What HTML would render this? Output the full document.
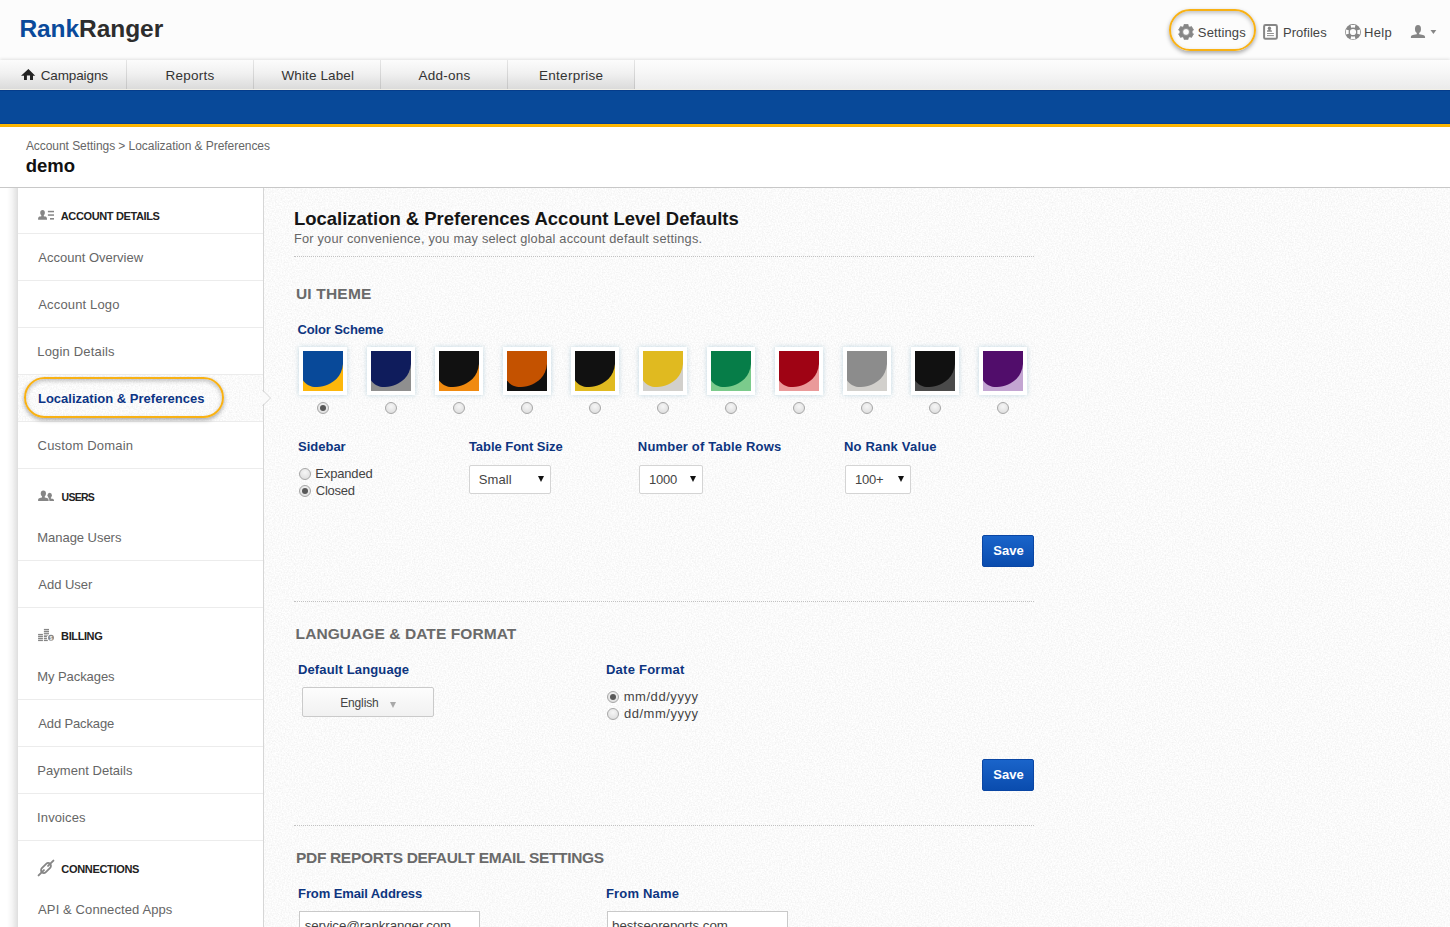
<!DOCTYPE html>
<html lang="en">
<head>
<meta charset="utf-8">
<title>Localization &amp; Preferences</title>
<style>
*{box-sizing:border-box;margin:0;padding:0}
html,body{width:1450px;height:927px;overflow:hidden;background:#fff}
body{font-family:"Liberation Sans",sans-serif;color:#333;position:relative}
.abs{position:absolute}
.t{position:absolute;white-space:nowrap;line-height:20px}
#top{position:absolute;left:0;top:0;width:1450px;height:60px;background:#fcfcfc}
#setpill{position:absolute;left:1169px;top:9px;width:87px;height:42px;border:2px solid #f8b114;border-radius:21px;box-shadow:0 2px 4px rgba(0,0,0,.34),inset 0 2px 4px rgba(0,0,0,.24)}
#nav{position:absolute;left:0;top:60px;width:1450px;height:29px;background:linear-gradient(#fdfdfd,#f6f6f6 45%,#ebebeb);box-shadow:0 -1px 3px rgba(0,0,0,.11)}
#navtabs{position:absolute;left:0;top:0;width:634px;height:29px;background:linear-gradient(#fcfcfc,#f1f1f1 45%,#dbdbdb)}
#nav i{position:absolute;top:0;width:1px;height:29px;background:linear-gradient(#e6e6e6,#c4c4c4)}
#navline{position:absolute;left:0;top:89px;width:1450px;height:1px;background:#f1efe6}
#blue{position:absolute;left:0;top:90px;width:1450px;height:34px;background:#084999;border-top:1px solid #053c8b;border-bottom:1px solid #053f95}
#yellow{position:absolute;left:0;top:124px;width:1450px;height:3px;background:linear-gradient(#fdbb00,#fbae00)}
#crumbbar{position:absolute;left:0;top:127px;width:1450px;height:61px;background:#fff;border-bottom:1px solid #c8c8c8}
#main{position:absolute;left:264px;top:188px;width:1186px;height:739px;background:#fff}
#side{position:absolute;left:18px;top:188px;width:246px;height:739px;background:#fff;border-right:1px solid #d6d6d6}
#sideshadow{position:absolute;left:7px;top:188px;width:11px;height:739px;background:linear-gradient(to right,rgba(0,0,0,0),rgba(0,0,0,.04) 45%,rgba(0,0,0,.13))}
.sd{position:absolute;left:18px;width:245px;height:1px;background:#ececec}
#selrow{position:absolute;left:18px;top:375px;width:245px;height:46px;background:#fff}
#selpill{position:absolute;left:24px;top:377px;width:200px;height:41px;border:2px solid #f8b114;border-radius:21px;box-shadow:0 2px 4px rgba(0,0,0,.34),inset 0 2px 4px rgba(0,0,0,.24)}
.dot{position:absolute;left:294px;width:740px;height:0;border-top:1px dotted #c2c2c2}
.sw{position:absolute;width:48px;height:48px;background:#fff;padding:4px;box-shadow:0 0 5px rgba(140,185,205,.5)}
.sw svg{display:block}
.rd{position:absolute;width:12px;height:12px;border-radius:50%;border:1px solid #a6a6a6;background:radial-gradient(circle at 50% 35%,#f6f6f6,#d9d9d9)}
.rd.on::after{content:"";position:absolute;left:2px;top:2px;width:6px;height:6px;border-radius:50%;background:#585858}
.select{position:absolute;height:29px;background:#fff;border:1px solid #d4d4d4;border-radius:2px}
.select i{position:absolute;right:6px;top:10px;width:0;height:0;border-left:3px solid transparent;border-right:3px solid transparent;border-top:6px solid #111}
.btn{position:absolute;width:52px;height:32px;background:linear-gradient(#1a64ca,#0a4cae);border:1px solid #0a46a4;border-radius:2px}
.lang{position:absolute;width:132px;height:30px;border:1px solid #cacaca;background:linear-gradient(#fdfdfd,#f1f1f1);border-radius:2px}
.lang i{position:absolute;left:87px;top:14px;width:0;height:0;border-left:3px solid transparent;border-right:3px solid transparent;border-top:6px solid #a8a8a8}
.inp{position:absolute;width:181px;height:28px;background:#fff;border:1px solid #c9c9c9}
</style>
</head>
<body>

<div id="top"></div>
<div id="setpill"></div>
<div class="t" id="lg1" style="left:19.43px;top:19px;font-size:24.5px;color:#2d2d2d;letter-spacing:-0.063px;font-weight:bold"><span style="color:#0a4a9b">Rank</span>Ranger</div>
<div class="t" id="tset" style="left:1197.86px;top:23px;font-size:13px;color:#444;letter-spacing:0.124px">Settings</div>
<div class="t" id="tpro" style="left:1283px;top:23px;font-size:13px;color:#444;letter-spacing:0.041px">Profiles</div>
<div class="t" id="thlp" style="left:1364px;top:23px;font-size:13px;color:#444;letter-spacing:0.331px">Help</div>
<div id="nav"><div id="navtabs"></div><i style="left:126px"></i><i style="left:253px"></i><i style="left:380px"></i><i style="left:507px"></i><i style="left:634px"></i></div>
<div class="t" id="n1" style="left:40.68px;top:66px;font-size:13.5px;color:#333;letter-spacing:-0.115px">Campaigns</div>
<div class="t" id="n2" style="left:165.4px;top:66px;font-size:13.5px;color:#333;letter-spacing:0.275px">Reports</div>
<div class="t" id="n3" style="left:281.5px;top:66px;font-size:13.5px;color:#333;letter-spacing:0.12px">White Label</div>
<div class="t" id="n4" style="left:418.6px;top:66px;font-size:13.5px;color:#333;letter-spacing:0.223px">Add-ons</div>
<div class="t" id="n5" style="left:539px;top:66px;font-size:13.5px;color:#333;letter-spacing:0.287px">Enterprise</div>
<div id="navline"></div>
<div id="blue"></div>
<div id="yellow"></div>
<div id="crumbbar"></div>
<div class="t" id="crumb" style="left:25.9px;top:136px;font-size:12px;color:#666;letter-spacing:-0.054px">Account Settings &gt; Localization &amp; Preferences</div>
<div class="t" id="acct" style="left:25.8px;top:156px;font-size:18.5px;color:#111;letter-spacing:-0.026px;font-weight:bold">demo</div>
<div id="main"></div>
<svg class="abs" style="left:264px;top:188px" width="1186" height="739"><filter id="nz" x="0" y="0" width="100%" height="100%"><feTurbulence type="fractalNoise" baseFrequency="0.7" numOctaves="2" seed="3"/><feColorMatrix type="matrix" values="0 0 0 0 0  0 0 0 0 0  0 0 0 0 0  0.10 0 0 0 -0.031"/></filter><rect width="1186" height="739" filter="url(#nz)"/></svg>
<div id="sideshadow"></div>
<div id="side"></div>
<div id="selrow"></div>
<svg class="abs" style="left:18px;top:375px" width="245" height="46"><rect width="245" height="46" filter="url(#nz)"/></svg>
<div class="sd" style="top:233px"></div>
<div class="sd" style="top:280px"></div>
<div class="sd" style="top:327px"></div>
<div class="sd" style="top:374px"></div>
<div class="sd" style="top:421px"></div>
<div class="sd" style="top:468px"></div>
<div class="sd" style="top:560px"></div>
<div class="sd" style="top:607px"></div>
<div class="sd" style="top:699px"></div>
<div class="sd" style="top:746px"></div>
<div class="sd" style="top:793px"></div>
<div class="sd" style="top:840px"></div>

<div id="selpill"></div>
<div class="t" id="sh1" style="left:60.8px;top:206px;font-size:11px;color:#222;letter-spacing:-0.368px;font-weight:bold">ACCOUNT DETAILS</div>
<div class="t" id="s1" style="left:38.3px;top:248px;font-size:13px;color:#666;letter-spacing:0.002px">Account Overview</div>
<div class="t" id="s2" style="left:38.3px;top:295px;font-size:13px;color:#666;letter-spacing:0.148px">Account Logo</div>
<div class="t" id="s3" style="left:37.3px;top:342px;font-size:13px;color:#666;letter-spacing:0.178px">Login Details</div>
<div class="t" id="s4" style="left:37.95px;top:389px;font-size:13px;color:#0b3485;letter-spacing:0.01px;font-weight:bold">Localization &amp; Preferences</div>
<div class="t" id="s5" style="left:37.6px;top:436px;font-size:13px;color:#666;letter-spacing:0.186px">Custom Domain</div>
<div class="t" id="sh2" style="left:61.6px;top:487px;font-size:10.5px;color:#222;letter-spacing:-0.736px;font-weight:bold">USERS</div>
<div class="t" id="s6" style="left:37.3px;top:528px;font-size:13px;color:#666;letter-spacing:-0.04px">Manage Users</div>
<div class="t" id="s7" style="left:38.3px;top:575px;font-size:13px;color:#666;letter-spacing:-0.013px">Add User</div>
<div class="t" id="sh3" style="left:61.08px;top:626px;font-size:11px;color:#222;letter-spacing:-0.39px;font-weight:bold">BILLING</div>
<div class="t" id="s8" style="left:37.3px;top:667px;font-size:13px;color:#666;letter-spacing:-0.08px">My Packages</div>
<div class="t" id="s9" style="left:38.3px;top:714px;font-size:13px;color:#666;letter-spacing:-0.14px">Add Package</div>
<div class="t" id="s10" style="left:37.3px;top:761px;font-size:13px;color:#666;letter-spacing:0.032px">Payment Details</div>
<div class="t" id="s11" style="left:37.1px;top:808px;font-size:13px;color:#666;letter-spacing:0.105px">Invoices</div>
<div class="t" id="sh4" style="left:61.3px;top:859px;font-size:11px;color:#222;letter-spacing:-0.324px;font-weight:bold">CONNECTIONS</div>
<div class="t" id="s12" style="left:38.1px;top:900px;font-size:13px;color:#666;letter-spacing:0.106px">API &amp; Connected Apps</div>
<svg class="abs" style="left:262px;top:388px" width="10" height="20" viewBox="0 0 10 20"><path d="M0,2.4 L0,17.6 L7.6,10 Z" fill="#fafafa"/><path d="M0.5,2 L8.5,10 L0.5,18" fill="none" stroke="#d2d2d2" stroke-width="1"/></svg>

<div class="t" id="h1" style="left:294px;top:209px;font-size:18.5px;color:#151515;letter-spacing:-0.016px;font-weight:bold">Localization &amp; Preferences Account Level Defaults</div>
<div class="t" id="sub" style="left:294px;top:229px;font-size:12.75px;color:#666;letter-spacing:0.216px">For your convenience, you may select global account default settings.</div>
<div class="dot" style="top:256px"></div>
<div class="t" id="h2a" style="left:295.89px;top:284px;font-size:15.5px;color:#6a6a6a;letter-spacing:0.202px;font-weight:bold">UI THEME</div>
<div class="t" id="l1" style="left:297.54px;top:320px;font-size:13px;color:#0d3580;letter-spacing:-0.135px;font-weight:bold">Color Scheme</div>
<div class="sw" style="left:299px;top:347px"><svg width="40" height="40" viewBox="0 0 40 40"><rect width="40" height="40" fill="#fdb70b"/><path d="M0,0H40V12.9C39.5,19 37,24 33.8,27.5C29,32.5 22,35.5 14,36.1C8,36.3 2.5,33.5 0,29.2Z" fill="#084999"/></svg></div>
<div class="rd on" style="left:317px;top:402px"></div>
<div class="sw" style="left:367px;top:347px"><svg width="40" height="40" viewBox="0 0 40 40"><rect width="40" height="40" fill="#8f8f8f"/><path d="M0,0H40V12.9C39.5,19 37,24 33.8,27.5C29,32.5 22,35.5 14,36.1C8,36.3 2.5,33.5 0,29.2Z" fill="#0f1c5c"/></svg></div>
<div class="rd" style="left:385px;top:402px"></div>
<div class="sw" style="left:435px;top:347px"><svg width="40" height="40" viewBox="0 0 40 40"><rect width="40" height="40" fill="#f08a10"/><path d="M0,0H40V12.9C39.5,19 37,24 33.8,27.5C29,32.5 22,35.5 14,36.1C8,36.3 2.5,33.5 0,29.2Z" fill="#111111"/></svg></div>
<div class="rd" style="left:453px;top:402px"></div>
<div class="sw" style="left:503px;top:347px"><svg width="40" height="40" viewBox="0 0 40 40"><rect width="40" height="40" fill="#111111"/><path d="M0,0H40V12.9C39.5,19 37,24 33.8,27.5C29,32.5 22,35.5 14,36.1C8,36.3 2.5,33.5 0,29.2Z" fill="#c45200"/></svg></div>
<div class="rd" style="left:521px;top:402px"></div>
<div class="sw" style="left:571px;top:347px"><svg width="40" height="40" viewBox="0 0 40 40"><rect width="40" height="40" fill="#e0ba20"/><path d="M0,0H40V12.9C39.5,19 37,24 33.8,27.5C29,32.5 22,35.5 14,36.1C8,36.3 2.5,33.5 0,29.2Z" fill="#111111"/></svg></div>
<div class="rd" style="left:589px;top:402px"></div>
<div class="sw" style="left:639px;top:347px"><svg width="40" height="40" viewBox="0 0 40 40"><rect width="40" height="40" fill="#d2d0cc"/><path d="M0,0H40V12.9C39.5,19 37,24 33.8,27.5C29,32.5 22,35.5 14,36.1C8,36.3 2.5,33.5 0,29.2Z" fill="#e0ba20"/></svg></div>
<div class="rd" style="left:657px;top:402px"></div>
<div class="sw" style="left:707px;top:347px"><svg width="40" height="40" viewBox="0 0 40 40"><rect width="40" height="40" fill="#7bcb8c"/><path d="M0,0H40V12.9C39.5,19 37,24 33.8,27.5C29,32.5 22,35.5 14,36.1C8,36.3 2.5,33.5 0,29.2Z" fill="#067d48"/></svg></div>
<div class="rd" style="left:725px;top:402px"></div>
<div class="sw" style="left:775px;top:347px"><svg width="40" height="40" viewBox="0 0 40 40"><rect width="40" height="40" fill="#ea9a9a"/><path d="M0,0H40V12.9C39.5,19 37,24 33.8,27.5C29,32.5 22,35.5 14,36.1C8,36.3 2.5,33.5 0,29.2Z" fill="#9f0314"/></svg></div>
<div class="rd" style="left:793px;top:402px"></div>
<div class="sw" style="left:843px;top:347px"><svg width="40" height="40" viewBox="0 0 40 40"><rect width="40" height="40" fill="#d2d0cc"/><path d="M0,0H40V12.9C39.5,19 37,24 33.8,27.5C29,32.5 22,35.5 14,36.1C8,36.3 2.5,33.5 0,29.2Z" fill="#8c8c8c"/></svg></div>
<div class="rd" style="left:861px;top:402px"></div>
<div class="sw" style="left:911px;top:347px"><svg width="40" height="40" viewBox="0 0 40 40"><rect width="40" height="40" fill="#4a4a4a"/><path d="M0,0H40V12.9C39.5,19 37,24 33.8,27.5C29,32.5 22,35.5 14,36.1C8,36.3 2.5,33.5 0,29.2Z" fill="#111111"/></svg></div>
<div class="rd" style="left:929px;top:402px"></div>
<div class="sw" style="left:979px;top:347px"><svg width="40" height="40" viewBox="0 0 40 40"><rect width="40" height="40" fill="#c3a5d2"/><path d="M0,0H40V12.9C39.5,19 37,24 33.8,27.5C29,32.5 22,35.5 14,36.1C8,36.3 2.5,33.5 0,29.2Z" fill="#510d6b"/></svg></div>
<div class="rd" style="left:997px;top:402px"></div>

<div class="t" id="l2" style="left:298.0px;top:437px;font-size:13px;color:#0d3580;letter-spacing:-0.0px;font-weight:bold">Sidebar</div>
<div class="t" id="l3" style="left:468.9px;top:437px;font-size:13px;color:#0d3580;letter-spacing:-0.039px;font-weight:bold">Table Font Size</div>
<div class="t" id="l4" style="left:637.85px;top:437px;font-size:13px;color:#0d3580;letter-spacing:0.185px;font-weight:bold">Number of Table Rows</div>
<div class="t" id="l5" style="left:843.95px;top:437px;font-size:13px;color:#0d3580;letter-spacing:0.195px;font-weight:bold">No Rank Value</div>
<div class="rd" style="left:299px;top:468px"></div>
<div class="rd on" style="left:299px;top:485px"></div>
<div class="t" id="r1" style="left:315.3px;top:464px;font-size:13px;color:#444;letter-spacing:-0.16px">Expanded</div>
<div class="t" id="r2" style="left:315.81px;top:481px;font-size:13px;color:#444;letter-spacing:-0.248px">Closed</div>
<div class="select" style="left:469px;top:465px;width:82px"><i></i></div>
<div class="select" style="left:639px;top:465px;width:64px"><i></i></div>
<div class="select" style="left:845px;top:465px;width:66px"><i></i></div>
<div class="t" id="o1" style="left:478.68px;top:470px;font-size:13px;color:#444;letter-spacing:0.11px">Small</div>
<div class="t" id="o2" style="left:649.0px;top:470px;font-size:13px;color:#444;letter-spacing:-0.261px">1000</div>
<div class="t" id="o3" style="left:854.96px;top:470px;font-size:13px;color:#444;letter-spacing:-0.217px">100+</div>
<div class="btn" style="left:982px;top:535px"></div>
<div class="t" id="b1" style="left:993.33px;top:541px;font-size:13px;color:#fff;letter-spacing:-0.025px;font-weight:bold">Save</div>
<div class="dot" style="top:601px"></div>
<div class="t" id="h2b" style="left:295.6px;top:624px;font-size:15.5px;color:#6a6a6a;letter-spacing:0.08px;font-weight:bold">LANGUAGE &amp; DATE FORMAT</div>
<div class="t" id="l6" style="left:297.95px;top:660px;font-size:13px;color:#0d3580;letter-spacing:0.139px;font-weight:bold">Default Language</div>
<div class="t" id="l7" style="left:605.95px;top:660px;font-size:13px;color:#0d3580;letter-spacing:0.249px;font-weight:bold">Date Format</div>
<div class="lang" style="left:302px;top:687px"><i></i></div>
<div class="t" id="eng" style="left:340.19px;top:693px;font-size:12px;color:#444;letter-spacing:-0.14px">English</div>
<div class="rd on" style="left:607px;top:691px"></div>
<div class="rd" style="left:607px;top:708px"></div>
<div class="t" id="r3" style="left:623.7px;top:687px;font-size:13px;color:#444;letter-spacing:0.551px">mm/dd/yyyy</div>
<div class="t" id="r4" style="left:623.98px;top:704px;font-size:13px;color:#444;letter-spacing:0.521px">dd/mm/yyyy</div>
<div class="btn" style="left:982px;top:759px"></div>
<div class="t" id="b2" style="left:993.33px;top:765px;font-size:13px;color:#fff;letter-spacing:-0.017px;font-weight:bold">Save</div>
<div class="dot" style="top:825px"></div>
<div class="t" id="h2c" style="left:296px;top:848px;font-size:15.5px;color:#6a6a6a;letter-spacing:-0.326px;font-weight:bold">PDF REPORTS DEFAULT EMAIL SETTINGS</div>
<div class="t" id="l8" style="left:298.05px;top:884px;font-size:13px;color:#0d3580;letter-spacing:-0.104px;font-weight:bold">From Email Address</div>
<div class="t" id="l9" style="left:605.94px;top:884px;font-size:13px;color:#0d3580;letter-spacing:0.186px;font-weight:bold">From Name</div>
<div class="inp" style="left:299px;top:911px"></div>
<div class="inp" style="left:607px;top:911px"></div>
<div class="t" id="i1" style="left:304.65px;top:916px;font-size:13.33px;color:#444;letter-spacing:-0.086px">service@rankranger.com</div>
<div class="t" id="i2" style="left:612.05px;top:916px;font-size:13.33px;color:#444;letter-spacing:-0.074px">bestseoreports.com</div>
<svg class="abs" style="left:0;top:0;pointer-events:none" width="1450" height="927" viewBox="0 0 1450 927">
<path d="M28.4,68.9 L35.2,75.7 H33 V80 H30 V75.5 H26.9 V80 H24 V75.7 H21 Z" fill="#222"/>
<path d="M1183.90,26.24 L1184.00,24.53 L1188.10,24.53 L1188.20,26.24 L1189.92,27.23 L1191.45,26.46 L1193.50,30.02 L1192.07,30.96 L1192.07,32.94 L1193.50,33.88 L1191.45,37.44 L1189.92,36.67 L1188.20,37.66 L1188.10,39.37 L1184.00,39.37 L1183.90,37.66 L1182.18,36.67 L1180.65,37.44 L1178.60,33.88 L1180.03,32.94 L1180.03,30.96 L1178.60,30.02 L1180.65,26.46 L1182.18,27.23Z M1189.45,31.95 A3.4,3.4 0 1,0 1182.6499999999999,31.95 A3.4,3.4 0 1,0 1189.45,31.95Z" fill="#868686" fill-rule="evenodd" stroke="#868686" stroke-width="0.8" stroke-linejoin="round"/>
<rect x="1264.1" y="25.1" width="12.8" height="13.7" rx="1.4" fill="#fff" stroke="#868686" stroke-width="2"/>
<g fill="#868686"><ellipse cx="1269.45" cy="28.25" rx="1.65" ry="1.65"/><path d="M1267.00,31.70 L1267.00,31.28 C1267.20,30.79 1266.32,30.46 1268.46,30.30 L1268.46,28.90 L1270.44,28.90 L1270.44,30.30 C1272.59,30.46 1271.70,30.79 1271.90,31.28 L1271.90,31.70 Z"/></g>
<rect x="1267" y="33.1" width="6.9" height="0.9" fill="#868686"/><rect x="1267" y="35.2" width="6.9" height="0.9" fill="#868686"/>
<circle cx="1353" cy="32" r="7.950000000000001" fill="#868686"/><path d="M1350.6,25.1 Q1353,24.65 1355.4,25.1 L1354.85,27.8 Q1353,27.4 1351.15,27.8 Z" fill="#fcfcfc" transform="rotate(0 1353 32)"/><path d="M1350.6,25.1 Q1353,24.65 1355.4,25.1 L1354.85,27.8 Q1353,27.4 1351.15,27.8 Z" fill="#fcfcfc" transform="rotate(90 1353 32)"/><path d="M1350.6,25.1 Q1353,24.65 1355.4,25.1 L1354.85,27.8 Q1353,27.4 1351.15,27.8 Z" fill="#fcfcfc" transform="rotate(180 1353 32)"/><path d="M1350.6,25.1 Q1353,24.65 1355.4,25.1 L1354.85,27.8 Q1353,27.4 1351.15,27.8 Z" fill="#fcfcfc" transform="rotate(270 1353 32)"/><circle cx="1353" cy="32" r="3.1" fill="#fcfcfc"/>
<g fill="#868686"><ellipse cx="1417.97" cy="29.05" rx="3.00" ry="4.05"/><path d="M1410.90,37.90 L1410.90,36.78 C1411.10,35.47 1412.27,34.61 1416.77,34.16 L1416.77,32.10 L1419.17,32.10 L1419.17,34.16 C1423.67,34.61 1424.85,35.47 1425.05,36.78 L1425.05,37.90 Z"/></g>
<path d="M1430.5,30.1 H1436.3 L1433.4,34 Z" fill="#868686"/>
<g fill="#868686"><ellipse cx="42.55" cy="212.75" rx="2.30" ry="2.65"/><path d="M38.10,219.70 L38.10,218.69 C38.30,217.52 38.18,216.75 41.31,216.35 L41.31,214.40 L43.79,214.40 L43.79,216.35 C46.92,216.75 46.80,217.52 47.00,218.69 L47.00,219.70 Z"/></g>
<rect x="47.9" y="210.8" width="6.1" height="1.5" fill="#868686"/><rect x="47.9" y="214.3" width="6.1" height="1.5" fill="#868686"/><rect x="50" y="218" width="4" height="1.6" fill="#868686"/>
<g fill="#868686"><ellipse cx="49.70" cy="495.20" rx="2.20" ry="2.50"/><path d="M45.40,501.00 L45.40,500.23 C45.60,499.33 45.52,498.73 48.51,498.43 L48.51,496.70 L50.89,496.70 L50.89,498.43 C53.88,498.73 53.80,499.33 54.00,500.23 L54.00,501.00 Z"/></g>
<g fill="#fff" stroke="#fff" stroke-width="1.5"><ellipse cx="43.35" cy="493.45" rx="2.60" ry="2.95"/><path d="M38.10,501.00 L38.10,499.92 C38.30,498.67 38.41,497.84 41.95,497.41 L41.95,495.40 L44.75,495.40 L44.75,497.41 C48.29,497.84 48.40,498.67 48.60,499.92 L48.60,501.00 Z"/></g><g fill="#868686"><ellipse cx="43.35" cy="493.45" rx="2.60" ry="2.95"/><path d="M38.10,501.00 L38.10,499.92 C38.30,498.67 38.41,497.84 41.95,497.41 L41.95,495.40 L44.75,495.40 L44.75,497.41 C48.29,497.84 48.40,498.67 48.60,499.92 L48.60,501.00 Z"/></g>
<rect x="36" y="501" width="20" height="2" fill="#fff"/>
<rect x="38.1" y="634" width="4.8" height="7" fill="#868686" opacity=".22"/><rect x="43.9" y="629" width="5.1" height="6.5" fill="#868686" opacity=".22"/><rect x="43.9" y="635.5" width="3.2" height="5.5" fill="#868686" opacity=".22"/><rect x="38.1" y="633.90" width="4.8" height="1.2" fill="#868686"/><rect x="38.1" y="635.85" width="4.8" height="1.2" fill="#868686"/><rect x="38.1" y="637.90" width="4.8" height="1.2" fill="#868686"/><rect x="38.1" y="639.90" width="4.8" height="1.2" fill="#868686"/><rect x="43.9" y="628.90" width="5.10" height="1.2" fill="#868686" opacity="1"/><rect x="43.9" y="630.90" width="5.10" height="1.2" fill="#868686" opacity="1"/><rect x="43.9" y="632.90" width="5.10" height="1.2" fill="#868686" opacity="0.9"/><rect x="43.9" y="634.80" width="4.10" height="1.2" fill="#868686" opacity="0.45"/><rect x="43.9" y="635.85" width="3.00" height="1.2" fill="#868686" opacity="1"/><rect x="43.9" y="637.90" width="3.00" height="1.2" fill="#868686" opacity="1"/><rect x="43.9" y="639.90" width="3.90" height="1.2" fill="#868686" opacity="1"/><circle cx="51" cy="637.8" r="3.35" fill="#fff"/><circle cx="51" cy="637.8" r="2.95" fill="#868686"/><text x="51" y="639.5" font-size="4.6" font-weight="bold" text-anchor="middle" fill="#fff" font-family="Liberation Sans,sans-serif">$</text>
<g transform="translate(46 868) rotate(-45)" fill="none" stroke="#868686" stroke-width="1.8" stroke-linecap="round"><rect x="-5.85" y="-2.8" width="11.7" height="5.6" rx="2.8"/><line x1="-10.5" y1="0" x2="-2.9" y2="0" stroke-width="1.9"/><line x1="2.9" y1="0" x2="10.5" y2="0" stroke-width="1.9"/></g>
</svg>

</body>
</html>
